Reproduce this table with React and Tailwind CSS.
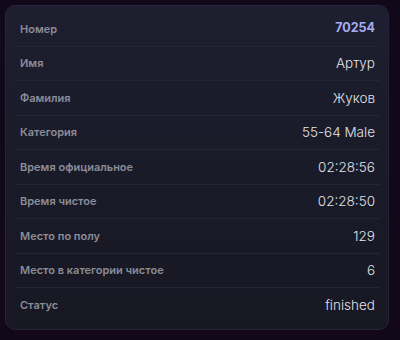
import React from "react";

const rows = [
  ["Номер", "70254", true],
  ["Имя", "Артур"],
  ["Фамилия", "Жуков"],
  ["Категория", "55-64 Male"],
  ["Время официальное", "02:28:56"],
  ["Время чистое", "02:28:50"],
  ["Место по полу", "129"],
  ["Место в категории чистое", "6"],
  ["Статус", "finished"],
];

export default function App() {
  return (
    <div className="w-[400px] h-[340px] bg-[#13081a] p-[5px] pr-[11px] pb-[10px]" style={{ fontFamily: "Inter, 'Noto Sans', sans-serif" }}>
      <div className="h-full rounded-[10px] bg-gradient-to-b from-[#1d1e2f] to-[#171822] border border-[#24253a] pl-[9px] pr-[8px] py-[6px] flex flex-col">
        {rows.map(([k, v, hl], i) => (
          <div
            key={k}
            className={`h-[34.5px] flex items-center justify-between pl-[5px] pr-[5px] ${i < rows.length - 1 ? "border-b border-[#242535]" : ""}`}
          >
            <span className="text-[11px] font-semibold text-[#8b8c97]">{k}</span>
            <span className={hl ? "text-[12.5px] font-bold text-[#a4adf2]" : "text-[13.5px] font-light text-[#e2e3ea]"}>{v}</span>
          </div>
        ))}
      </div>
    </div>
  );
}
